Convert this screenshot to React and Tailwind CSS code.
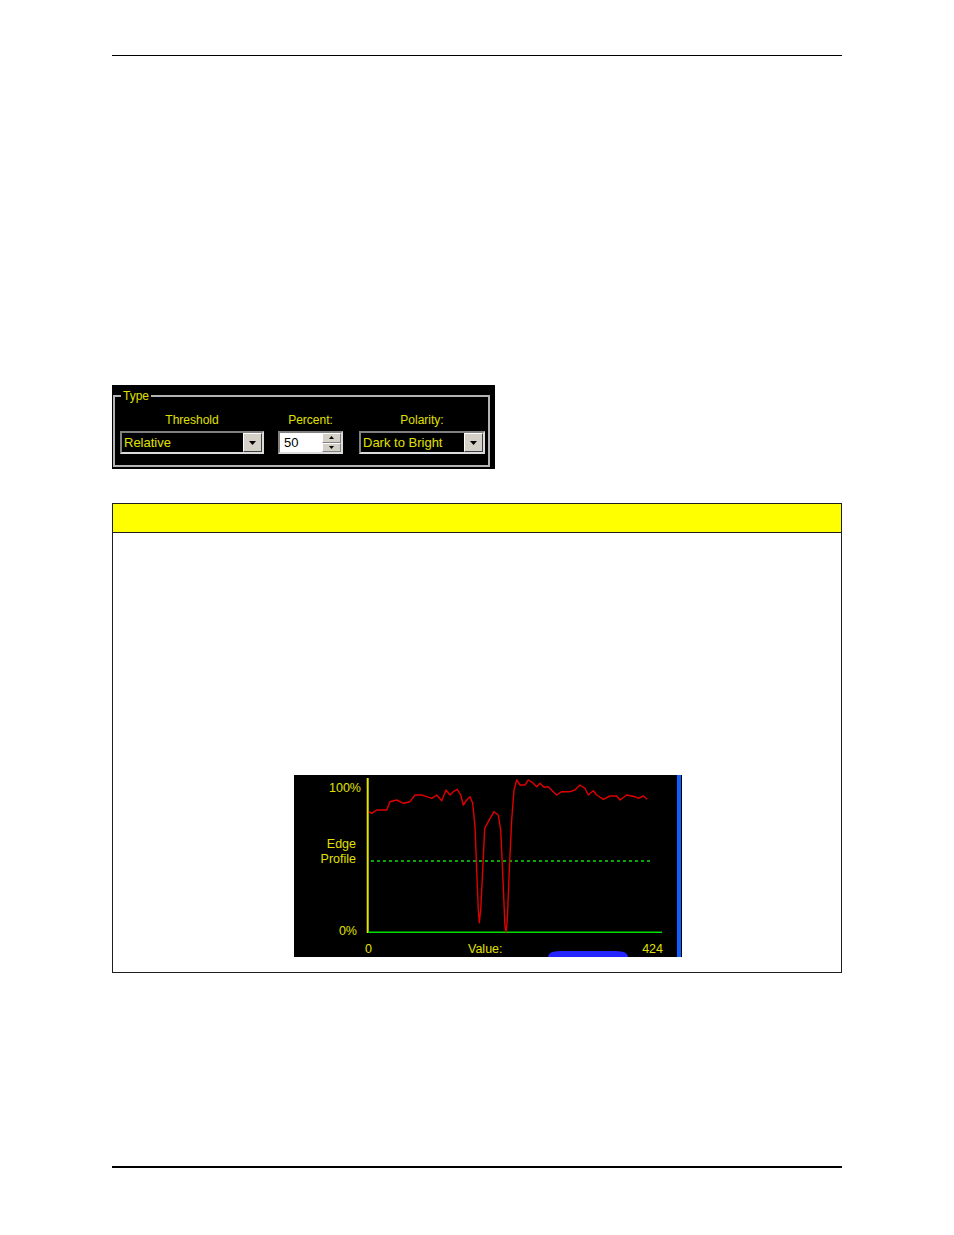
import React from "react";

const ui = { fontFamily: '"Liberation Sans", Arial, sans-serif' };

// traced from the edge profile, in page coordinates (viewBox matches)
const profile = [
  [369, 811.7], [371.7, 813.3], [376.7, 810], [386.7, 810], [390, 801.7], [396.7, 800],
  [403.3, 803.3], [410, 801.7], [415, 795], [421.7, 795], [426.7, 796.7], [431.7, 798.3],
  [436.7, 795], [441.7, 800.7], [446, 790], [450, 795], [453.3, 791.7], [457.3, 789.3],
  [460.7, 795], [463.3, 805], [466.7, 800], [470, 796.7], [472.7, 803.3], [475, 826.7],
  [476.7, 870], [478.3, 910], [479.3, 922.7], [480.7, 910], [482.7, 870], [484.7, 828.3],
  [488.3, 821.7], [494, 811.7], [498.3, 815], [500.7, 830], [503.3, 886.7], [505, 926.7],
  [506, 932], [507.3, 920], [509.3, 870], [511.7, 820], [514, 790], [516.7, 780],
  [520, 785], [525, 785], [528.3, 780], [532.7, 782.7], [536.7, 786.7], [540, 783.3],
  [544, 787.3], [548.3, 786.7], [553.3, 791.7], [556.7, 795], [561.7, 791.7], [570, 791.7],
  [575, 790], [580, 785], [585, 788.3], [588.3, 795], [593.3, 790.7], [596.7, 795],
  [603.3, 799.3], [610, 796], [616.7, 796], [620, 800], [626.7, 795], [635, 796.7],
  [638.3, 798.3], [643.3, 796], [647.3, 799.3],
];

const DropArrow = () => (
  <div className="w-[19px] h-[19px] bg-[#d4d0c8] border border-t-white border-l-white border-b-[#404040] border-r-[#404040] flex items-center justify-center">
    <svg width="7" height="4" viewBox="0 0 7 4">
      <path d="M0 0h7L3.5 4z" fill="#000" />
    </svg>
  </div>
);

const Select = ({ value, width }) => (
  <div
    className="h-[23px] flex items-center justify-between border-2 border-t-[#808080] border-l-[#808080] border-b-[#dcdcdc] border-r-[#dcdcdc] bg-black"
    style={{ width }}
  >
    <span className="pl-[2px] text-[13px] leading-none text-[#e0e000]">{value}</span>
    <DropArrow />
  </div>
);

const Spinner = () => (
  <div className="w-[65px] h-[23px] flex items-center justify-between border-2 border-t-[#808080] border-l-[#808080] border-b-[#dcdcdc] border-r-[#dcdcdc] bg-white">
    <span className="pl-[4px] text-[13px] leading-none text-black">50</span>
    <div className="flex flex-col h-full w-[19px]">
      {["M0 3h5L2.5 0z", "M0 0h5L2.5 3z"].map((d) => (
        <div
          key={d}
          className="flex-1 bg-[#d4d0c8] border border-t-white border-l-white border-b-[#808080] border-r-[#808080] flex items-center justify-center"
        >
          <svg width="5" height="3" viewBox="0 0 5 3">
            <path d={d} fill="#000" />
          </svg>
        </div>
      ))}
    </div>
  </div>
);

const TypePanel = () => (
  <div className="w-[383px] h-[84px] bg-black pt-[10px] pl-[1px]" style={ui}>
    <div className="relative w-[377px] h-[72px] border-2 border-[#b4b4b4]">
      <span className="absolute -top-[8px] left-[6px] bg-black px-[2px] text-[12px] leading-[14px] text-[#e0e000]">
        Type
      </span>
      <div className="flex gap-[14px] pl-[5px] pt-[16px]">
        <div className="flex flex-col items-center gap-[4px]">
          <span className="text-[12px] leading-[14px] text-[#e0e000]">Threshold</span>
          <Select value="Relative" width="144px" />
        </div>
        <div className="flex flex-col items-center gap-[4px]">
          <span className="text-[12px] leading-[14px] text-[#e0e000]">Percent:</span>
          <Spinner />
        </div>
        <div className="flex flex-col items-center gap-[4px] ml-[2px]">
          <span className="text-[12px] leading-[14px] text-[#e0e000]">Polarity:</span>
          <Select value="Dark to Bright" width="126px" />
        </div>
      </div>
    </div>
  </div>
);

const EdgeChart = () => (
  <svg
    width="388"
    height="182"
    viewBox="294 775 388 182"
    className="block"
    style={ui}
  >
    <rect x="294" y="775" width="388" height="182" fill="#000" />
    <path d="M548 957 Q548 951 560 951 L616 951 Q628 951 628 957 Z" fill="#2424ff" />
    <rect x="677" y="775" width="4" height="182" fill="#1060ff" />
    <line x1="367.7" y1="778" x2="367.7" y2="933" stroke="#e6e600" strokeWidth="2" />
    <line x1="368" y1="932.3" x2="662" y2="932.3" stroke="#00dd00" strokeWidth="1.6" />
    <line x1="371" y1="861" x2="650" y2="861" stroke="#10dd10" strokeWidth="1.3" strokeDasharray="3 3" />
    <polyline
      points={profile.map((p) => p.join(",")).join(" ")}
      fill="none"
      stroke="#e00000"
      strokeWidth="1.4"
      strokeLinejoin="round"
    />
    <g fill="#e0e000" fontSize="12.5">
      <text x="361" y="791.8" textAnchor="end">100%</text>
      <text x="356" y="847.8" textAnchor="end">Edge</text>
      <text x="356" y="862.8" textAnchor="end">Profile</text>
      <text x="357" y="934.8" textAnchor="end">0%</text>
      <text x="365" y="952.8">0</text>
      <text x="468" y="952.8">Value:</text>
      <text x="663" y="952.8" textAnchor="end">424</text>
    </g>
  </svg>
);

export default function App() {
  return (
    <div className="w-[954px] h-[1235px] bg-white" style={ui}>
      <div className="ml-[112px] w-[730px] pt-[54.5px] flex flex-col">
        <div className="h-[1.5px] bg-black" />

        <div className="mt-[329px]">
          <TypePanel />
        </div>

        <div className="mt-[34px] h-[470px] border border-[#1e1e1e] flex flex-col">
          <div className="h-[29px] bg-[#ffff00] border-b border-[#1e1e1e]" />
          <div className="flex-1 pt-[242px] pl-[181px]">
            <EdgeChart />
          </div>
        </div>

        <div className="mt-[193px] h-[1.5px] bg-black" />
      </div>
    </div>
  );
}
